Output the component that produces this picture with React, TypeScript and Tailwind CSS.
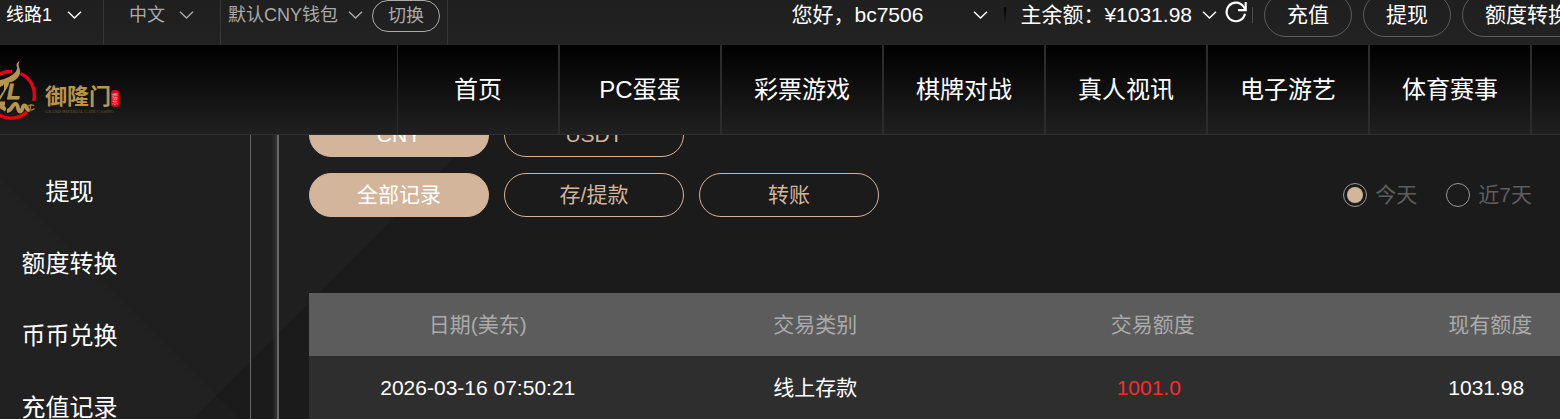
import { useState } from "react";
import clsx from "clsx";

const NAV = ["首页", "PC蛋蛋", "彩票游戏", "棋牌对战", "真人视讯", "电子游艺", "体育赛事"];
const SIDE = ["提现", "额度转换", "币币兑换", "充值记录"];
const COLUMNS = ["日期(美东)", "交易类别", "交易额度", "现有额度"];
const CURRENCIES = ["CNY", "USDT"];
const KINDS = ["全部记录", "存/提款", "转账"];
const RANGES = ["今天", "近7天"];

type RecordRow = { date: string; kind: string; amount: string; balance: string };

const ROWS: RecordRow[] = [
  { date: "2026-03-16 07:50:21", kind: "线上存款", amount: "1001.0", balance: "1031.98" },
];

export default function App() {
  return (
    <div className="flex h-screen flex-col overflow-hidden bg-[#1b1b1b] font-['Liberation_Sans','Noto_Sans_CJK_SC',sans-serif] text-white">
      <TopBar />
      <MainNav />
      <main className="flex min-h-0 flex-1 overflow-hidden bg-[linear-gradient(45deg,#ffffff02_169px,transparent_169px),linear-gradient(135deg,#1f1f1f_337px,#1b1b1b_337px)]">
        <Sidebar />
        <div className="w-[28px] shrink-0 border-r-2 border-[#666] bg-linear-to-r from-transparent from-80% to-[#333]" />
        <Records />
      </main>
    </div>
  );
}

function Chevron() {
  return (
    <svg width="15" height="8" viewBox="0 0 15 8" fill="none" stroke="currentColor" strokeWidth="1.4" className="pointer-events-none shrink-0">
      <path d="M1 .8 7.5 7 14 .8" />
    </svg>
  );
}

function PlainSelect({ label, value }: { label: string; value: string }) {
  return (
    <select aria-label={label} className="h-[30px] appearance-none bg-transparent text-[18px] leading-[30px] outline-none">
      <option>{value}</option>
    </select>
  );
}

function TopBar() {
  return (
    <header className="flex h-[45px] shrink-0 items-stretch overflow-hidden bg-linear-to-b from-[#1f1f1f] to-[#222]">
      <div className="flex shrink-0 border-r border-[#363636] pr-[21px] pl-[6px]">
        <div className="flex h-[30px] items-center gap-[14px]">
          <PlainSelect label="线路" value="线路1" />
          <Chevron />
        </div>
      </div>
      <div className="flex shrink-0 border-r border-[#363636] pr-[26px] pl-[25px] text-[#aaa]">
        <div className="flex h-[30px] items-center gap-[14px]">
          <PlainSelect label="语言" value="中文" />
          <Chevron />
        </div>
      </div>
      <div className="flex shrink-0 gap-[9px] border-r border-[#363636] px-[7px] text-[#aaa]">
        <div className="flex h-[30px] items-center gap-[9px]">
          <PlainSelect label="钱包" value="默认CNY钱包" />
          <Chevron />
        </div>
        <button type="button" className="h-8 rounded-full border border-[#aaa] px-[15px] text-[18px] leading-[30px]">
          切换
        </button>
      </div>

      <div className="-mr-8 ml-auto flex h-[30px] shrink-0 items-center text-[21px] leading-[30px]">
        <button type="button" className="flex items-center gap-[50px]">
          您好，bc7506 <Chevron />
        </button>
        <span className="ml-4 h-4 w-[2px] bg-linear-to-b from-black to-transparent" />
        <button type="button" className="ml-[14px] flex items-center gap-[10px]">
          主余额：¥1031.98 <Chevron />
        </button>
        <button type="button" aria-label="刷新" className="ml-2 pb-[6px]">
          <RefreshIcon />
        </button>
        <span className="ml-[5px] h-4 w-px bg-[#4a4a4a]" />
        <div className="ml-[11px] flex gap-[11px]">
          {["充值", "提现", "额度转换"].map((t) => (
            <button key={t} type="button" className="h-11 rounded-full border border-[#5c5c5c] px-[22px]">
              {t}
            </button>
          ))}
        </div>
      </div>
    </header>
  );
}

function RefreshIcon() {
  return (
    <svg width="22" height="22" viewBox="0 0 22 22" fill="none" stroke="currentColor" strokeWidth="2.2">
      <path d="M20 12.800A9.300 9.300 0 1 1 18.400 5.400L20.600 8.600" />
      <path d="M20.700 1v8.200h-7.700" />
    </svg>
  );
}

function Logo() {
  return (
    <svg width="122" height="66" viewBox="0 56 122 66" fill="none" role="img" aria-label="御隆门">
      <g stroke="#e60013" strokeWidth="3.4">
        <path d="M-4 75.500A23.500 23.500 0 0 1 12 70.500" />
        <path d="M20.500 72.500A23.500 23.500 0 0 1 33.600 100" />
        <path d="M27 111A23.500 23.500 0 0 1-5 111" />
      </g>
      <g fill="#b8954c">
        {/* dragon tail */}
        <path d="M19.500 60c-3 1.500-3.800 4-2.300 6.500-.2 3.500-2.200 5.500-5.200 7.500-3.500 2.300-7 4.200-12 5v7l3-1.500 1-1.500 0 6-4 6v4l8.500-14.500 .5-3c3-.5 5.500-1.500 8-4 3-3 4-6.500 2.500-10-.8-2.200-1.500-4.200 0-7.500z" />
        <text x="7" y="98" fontSize="22" fontWeight="700" fontStyle="italic" stroke="#b8954c" strokeWidth=".8">
          L
        </text>
      </g>
      <path
        d="M0 102.500h5M0 107c3-2 5 0 3.500 2.500M7 110c5 0 5-7 8.500-7s1.500 7.500 4.500 7.500 2-6 4.500-6 1.500 5 5 4.500"
        stroke="#b8954c"
        strokeWidth="3.800"
      />
      <path d="M27.500 106c1.500-2.500 5.500-2.500 6.500-1M29 108.500c2 1 4 .5 5.500-1M31 103l-1 6" stroke="#a07f3e" strokeWidth="1.300" />
      <text x="45" y="103" fill="#b8954c" fontSize="22" fontWeight="700">
        御隆门
      </text>
      <text x="45" y="112" fill="#6d5a30" fontSize="4.500" className="font-['Liberation_Serif',serif]">
        GRAND IMPERIAL GATE CASINO
      </text>
      <rect x="111" y="89" width="8" height="17" rx="3.500" fill="#e60013" />
      <text fill="#f3b0a0" fontSize="6">
        <tspan x="112" y="97">娱</tspan>
        <tspan x="112" y="103">乐</tspan>
      </text>
    </svg>
  );
}

function MainNav() {
  return (
    <nav className="flex h-[90px] shrink-0 border-b border-[#303030] bg-[linear-gradient(#000,#202020)] pr-7">
      <a href="#" className="flex min-w-0 flex-1 items-center">
        <Logo />
      </a>
      <div className="flex border-l border-[#2c2c2c]">
        {NAV.map((item) => (
          <a
            key={item}
            href="#"
            className="flex w-[162px] items-center justify-center border-r-2 border-[#2c2c2c] pt-px text-2xl"
          >
            {item}
          </a>
        ))}
      </div>
    </nav>
  );
}

function Sidebar() {
  return (
    <aside className="w-[251px] shrink-0 border-r border-[#666] pt-[21px]">
      {SIDE.map((item) => (
        <a key={item} href="#" className="block w-[139px] text-center text-2xl leading-[72px]">
          {item}
        </a>
      ))}
    </aside>
  );
}

function PillRow({ options }: { options: string[] }) {
  const [active, setActive] = useState(options[0]);
  return (
    <div className="flex gap-[15px]">
      {options.map((o) => (
        <button
          key={o}
          type="button"
          onClick={() => setActive(o)}
          className={clsx(
            "h-11 w-[180px] rounded-full border border-[#d2b59a] text-[21px] leading-[42px]",
            active === o ? "bg-[#d2b59a] text-white" : "text-[#d2b59a]",
          )}
        >
          {o}
        </button>
      ))}
    </div>
  );
}

function Records() {
  const [range, setRange] = useState(RANGES[0]);

  return (
    <section className="min-w-0 flex-1 overflow-hidden pl-[30px]">
      {/* the currency row is scrolled half under the nav */}
      <div className="-mt-[22px]">
        <PillRow options={CURRENCIES} />
      </div>
      <div className="mt-4 flex items-center justify-between pr-7">
        <PillRow options={KINDS} />
        <div className="flex gap-[29px] text-[21px] text-[#5e5e5e]">
          {RANGES.map((r) => (
            <label key={r} className="flex items-center gap-2">
              <input
                type="radio"
                name="range"
                checked={range === r}
                onChange={() => setRange(r)}
                className="size-6 appearance-none rounded-full border border-[#999] bg-clip-content p-[3px] checked:bg-[#d2b59a]"
              />
              {r}
            </label>
          ))}
        </div>
      </div>

      <table className="mt-[76px] w-full min-w-[1350px] table-fixed text-center text-[21px]">
        <thead>
          <tr className="h-[63px] bg-[#5c5c5c] text-[#aaa]">
            {COLUMNS.map((c) => (
              <th key={c} className="font-normal">
                {c}
              </th>
            ))}
          </tr>
        </thead>
        <tbody>
          {ROWS.map((row) => (
            <tr key={row.date} className="h-[63px] bg-[#2e2e2e]">
              <td>{row.date}</td>
              <td>{row.kind}</td>
              <td className="pr-2 text-[#ff2a2a]">{row.amount}</td>
              <td className="pr-2">{row.balance}</td>
            </tr>
          ))}
        </tbody>
      </table>
    </section>
  );
}
